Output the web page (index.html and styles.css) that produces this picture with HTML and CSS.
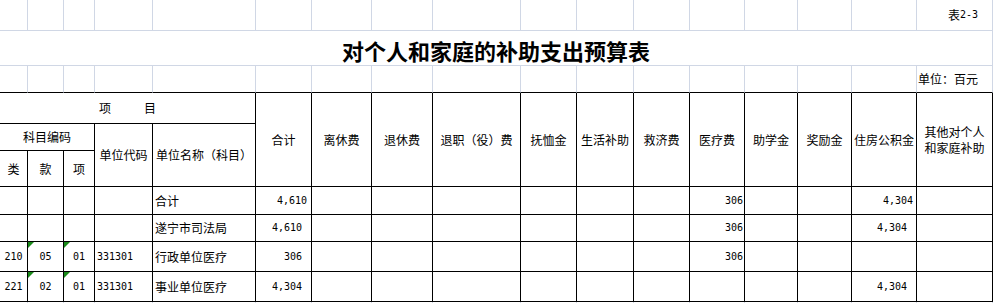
FILE: index.html
```html
<!DOCTYPE html>
<html lang="zh-CN">
<head>
<meta charset="utf-8">
<title>对个人和家庭的补助支出预算表</title>
<link rel="stylesheet" href="styles.css">
</head>
<body>
<div class="sheet">
  <!-- row 1 -->
  <div class="c g"></div><div class="c g"></div><div class="c g"></div><div class="c g"></div><div class="c g"></div><div class="c g"></div><div class="c g"></div><div class="c g"></div><div class="c g"></div><div class="c g"></div><div class="c g"></div><div class="c g"></div><div class="c g"></div><div class="c g"></div><div class="c g"></div><div class="c g"></div>
  <div class="c g right note">表<span class="d">2-3</span></div>
  <!-- row 2 -->
  <div class="c g title">对个人和家庭的补助支出预算表</div>
  <!-- row 3 -->
  <div class="c g gb"></div><div class="c g gb"></div><div class="c g gb"></div><div class="c g gb"></div><div class="c g gb"></div><div class="c g gb"></div><div class="c g gb"></div><div class="c g gb"></div><div class="c g gb"></div><div class="c g gb"></div><div class="c g gb"></div><div class="c g gb"></div><div class="c g gb"></div><div class="c g gb"></div><div class="c g gb"></div><div class="c g gb"></div>
  <div class="c g gb right note">单位：百元</div>
  <!-- header -->
  <div class="c b span5 xm"><span>项</span><span>目</span></div>
  <div class="c b tall">合计</div>
  <div class="c b tall">离休费</div>
  <div class="c b tall">退休费</div>
  <div class="c b tall">退职（役）费</div>
  <div class="c b tall">抚恤金</div>
  <div class="c b tall">生活补助</div>
  <div class="c b tall">救济费</div>
  <div class="c b tall">医疗费</div>
  <div class="c b tall">助学金</div>
  <div class="c b tall">奖励金</div>
  <div class="c b tall">住房公积金</div>
  <div class="c b tall two">其他对个人<br>和家庭补助</div>
  <div class="c b span3">科目编码</div>
  <div class="c b rows2">单位代码</div>
  <div class="c b rows2">单位名称（科目）</div>
  <div class="c b">类</div>
  <div class="c b">款</div>
  <div class="c b">项</div>
  <!-- data row 1 -->
  <div class="c b"></div><div class="c b"></div><div class="c b"></div><div class="c b"></div>
  <div class="c b left">合计</div>
  <div class="c b num p4">4,610</div>
  <div class="c b"></div><div class="c b"></div><div class="c b"></div><div class="c b"></div><div class="c b"></div><div class="c b"></div>
  <div class="c b num p2">306</div>
  <div class="c b"></div><div class="c b"></div>
  <div class="c b num p3">4,304</div>
  <div class="c b"></div>
  <!-- data row 2 -->
  <div class="c b"></div><div class="c b"></div><div class="c b"></div><div class="c b"></div>
  <div class="c b left">遂宁市司法局</div>
  <div class="c b num p9">4,610</div>
  <div class="c b"></div><div class="c b"></div><div class="c b"></div><div class="c b"></div><div class="c b"></div><div class="c b"></div>
  <div class="c b num p2">306</div>
  <div class="c b"></div><div class="c b"></div>
  <div class="c b num p9">4,304</div>
  <div class="c b"></div>
  <!-- data row 3 -->
  <div class="c b d">210</div>
  <div class="c b d flag">05</div>
  <div class="c b d flag">01</div>
  <div class="c b d left">331301</div>
  <div class="c b left">行政单位医疗</div>
  <div class="c b num p9">306</div>
  <div class="c b"></div><div class="c b"></div><div class="c b"></div><div class="c b"></div><div class="c b"></div><div class="c b"></div>
  <div class="c b num p2">306</div>
  <div class="c b"></div><div class="c b"></div>
  <div class="c b"></div>
  <div class="c b"></div>
  <!-- data row 4 -->
  <div class="c b d">221</div>
  <div class="c b d flag">02</div>
  <div class="c b d flag">01</div>
  <div class="c b d left">331301</div>
  <div class="c b left">事业单位医疗</div>
  <div class="c b num p9">4,304</div>
  <div class="c b"></div><div class="c b"></div><div class="c b"></div><div class="c b"></div><div class="c b"></div><div class="c b"></div>
  <div class="c b"></div>
  <div class="c b"></div><div class="c b"></div>
  <div class="c b num p9">4,304</div>
  <div class="c b"></div>
  <!-- trailing grid row -->
  <div class="c g"></div><div class="c g"></div><div class="c g"></div><div class="c g"></div><div class="c g"></div><div class="c g"></div><div class="c g"></div><div class="c g"></div><div class="c g"></div><div class="c g"></div><div class="c g"></div><div class="c g"></div><div class="c g"></div><div class="c g"></div><div class="c g"></div><div class="c g"></div><div class="c g"></div>
</div>
</body>
</html>
```
FILE: styles.css
```css
html, body {
  margin: 0;
  padding: 0;
  background: #ffffff;
}

.sheet {
  display: grid;
  width: 993px;
  grid-template-columns: 28px 36px 31px 58px 103px 56px 60px 61px 88px 56px 57px 56px 55px 53px 54px 65px 76px;
  grid-template-rows: 31px 35px 27px 31px 27px 36px 28px 27px 30px 30px 2px;
  font-family: "Noto Sans CJK SC", "Noto Sans", sans-serif;
  font-size: 12px;
  color: #000;
  line-height: 16px;
}

.c {
  box-sizing: border-box;
  display: flex;
  align-items: center;
  justify-content: center;
  position: relative;
  white-space: nowrap;
  overflow: hidden;
}

.g {
  border-right: 1px solid #d0d7e5;
  border-bottom: 1px solid #d0d7e5;
}

.g.gb {
  border-bottom: 1px solid #000;
}

.b {
  border-right: 1px solid #000;
  border-bottom: 1px solid #000;
}

.right {
  justify-content: flex-end;
}

.note {
  padding-right: 14px;
}

.title {
  grid-column: 1 / -1;
  font-size: 22px;
  font-weight: 700;
  padding-top: 3px;
  letter-spacing: 0;
}

.span5 {
  grid-column: span 5;
}

.span3 {
  grid-column: span 3;
}

.rows2 {
  grid-row: span 2;
}

.tall {
  grid-row: span 3;
}

.two {
  white-space: normal;
  text-align: center;
}

.xm {
  gap: 33px;
}

.left {
  justify-content: flex-start;
  padding-left: 2px;
}

.d {
  font-family: "DejaVu Sans Mono", "Liberation Mono", monospace;
  font-size: 10px;
}

.num {
  justify-content: flex-end;
  font-family: "DejaVu Sans Mono", "Liberation Mono", monospace;
  font-size: 10px;
}

.p2 { padding-right: 1px; }
.p3 { padding-right: 3px; }
.p4 { padding-right: 4px; }
.p9 { padding-right: 9px; }

.flag::before {
  content: "";
  position: absolute;
  top: 0;
  left: 0;
  width: 0;
  height: 0;
  border-top: 6px solid #1a8a1a;
  border-right: 6px solid transparent;
}
```
